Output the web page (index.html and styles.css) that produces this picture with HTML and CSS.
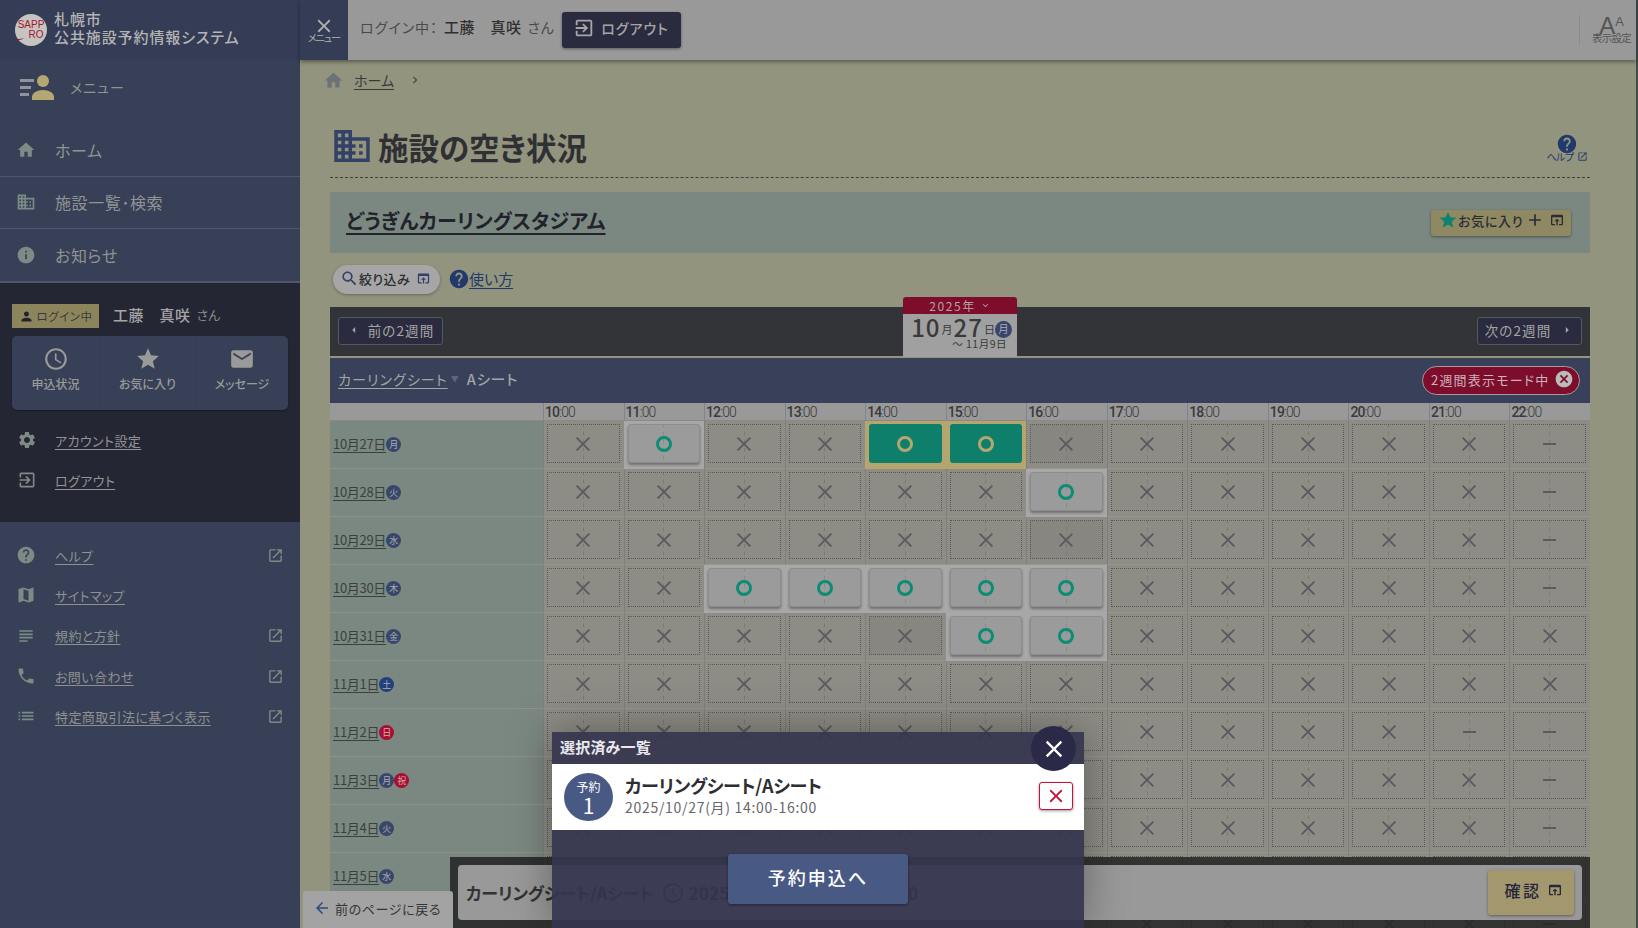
FILE: index.html
```html
<!DOCTYPE html>
<html lang="ja">
<head>
<meta charset="utf-8">
<title>施設の空き状況</title>
<link rel="stylesheet" href="styles.css">
</head>
<body>
<svg class="defs" aria-hidden="true">
<symbol id="i-home" viewBox="0 0 24 24"><path d="M10 20v-6h4v6h5v-8h3L12 3 2 12h3v8z"/></symbol>
<symbol id="i-biz" viewBox="0 0 24 24"><path d="M12 7V3H2v18h20V7H12zM6 19H4v-2h2v2zm0-4H4v-2h2v2zm0-4H4V9h2v2zm0-4H4V5h2v2zm4 12H8v-2h2v2zm0-4H8v-2h2v2zm0-4H8V9h2v2zm0-4H8V5h2v2zm10 12h-8v-2h2v-2h-2v-2h2v-2h-2V9h8v10zm-2-8h-2v2h2v-2zm0 4h-2v2h2v-2z"/></symbol>
<symbol id="i-info" viewBox="0 0 24 24"><path d="M12 2C6.48 2 2 6.48 2 12s4.48 10 10 10 10-4.48 10-10S17.52 2 12 2zm1 15h-2v-6h2v6zm0-8h-2V7h2v2z"/></symbol>
<symbol id="i-help" viewBox="0 0 24 24"><path d="M12 2C6.48 2 2 6.48 2 12s4.48 10 10 10 10-4.48 10-10S17.52 2 12 2zm1 17h-2v-2h2v2zm2.07-7.75l-.9.92C13.45 12.9 13 13.5 13 15h-2v-.5c0-1.1.45-2.1 1.17-2.83l1.24-1.26c.37-.36.59-.86.59-1.41 0-1.1-.9-2-2-2s-2 .9-2 2H8c0-2.21 1.79-4 4-4s4 1.79 4 4c0 .88-.36 1.68-.93 2.25z"/></symbol>
<symbol id="i-person" viewBox="0 0 24 24"><path d="M12 12c2.21 0 4-1.79 4-4s-1.79-4-4-4-4 1.79-4 4 1.79 4 4 4zm0 2c-2.67 0-8 1.34-8 4v2h16v-2c0-2.66-5.33-4-8-4z"/></symbol>
<symbol id="i-clock" viewBox="0 0 24 24"><path d="M11.99 2C6.47 2 2 6.48 2 12s4.47 10 9.99 10C17.52 22 22 17.52 22 12S17.52 2 11.99 2zM12 20c-4.42 0-8-3.58-8-8s3.58-8 8-8 8 3.58 8 8-3.58 8-8 8zm.5-13H11v6l5.25 3.15.75-1.23-4.5-2.67z"/></symbol>
<symbol id="i-star" viewBox="0 0 24 24"><path d="M12 17.27L18.18 21l-1.64-7.03L22 9.24l-7.19-.61L12 2 9.19 8.63 2 9.24l5.46 4.73L5.82 21z"/></symbol>
<symbol id="i-mail" viewBox="0 0 24 24"><path d="M20 4H4c-1.1 0-1.99.9-1.99 2L2 18c0 1.1.9 2 2 2h16c1.1 0 2-.9 2-2V6c0-1.1-.9-2-2-2zm0 4l-8 5-8-5V6l8 5 8-5v2z"/></symbol>
<symbol id="i-gear" viewBox="0 0 24 24"><path d="M19.14 12.94c.04-.3.06-.61.06-.94 0-.32-.02-.64-.07-.94l2.03-1.58c.18-.14.23-.41.12-.61l-1.92-3.32c-.12-.22-.37-.29-.59-.22l-2.39.96c-.5-.38-1.03-.7-1.62-.94l-.36-2.54c-.04-.24-.24-.41-.48-.41h-3.84c-.24 0-.43.17-.47.41l-.36 2.54c-.59.24-1.13.57-1.62.94l-2.39-.96c-.22-.08-.47 0-.59.22L2.74 8.87c-.12.21-.08.47.12.61l2.03 1.58c-.05.3-.09.63-.09.94s.02.64.07.94l-2.03 1.58c-.18.14-.23.41-.12.61l1.92 3.32c.12.22.37.29.59.22l2.39-.96c.5.38 1.03.7 1.62.94l.36 2.54c.05.24.24.41.48.41h3.84c.24 0 .44-.17.47-.41l.36-2.54c.59-.24 1.13-.56 1.62-.94l2.39.96c.22.08.47 0 .59-.22l1.92-3.32c.12-.22.07-.47-.12-.61l-2.01-1.58zM12 15.6c-1.98 0-3.6-1.62-3.6-3.6s1.62-3.6 3.6-3.6 3.6 1.62 3.6 3.6-1.62 3.6-3.6 3.6z"/></symbol>
<symbol id="i-exit" viewBox="0 0 24 24"><path d="M10.09 15.59L11.5 17l5-5-5-5-1.41 1.41L12.67 11H3v2h9.67l-2.58 2.59zM19 3H5c-1.11 0-2 .9-2 2v4h2V5h14v14H5v-4H3v4c0 1.1.89 2 2 2h14c1.1 0 2-.9 2-2V5c0-1.1-.9-2-2-2z"/></symbol>
<symbol id="i-map" viewBox="0 0 24 24"><path d="M20.5 3l-.16.03L15 5.1 9 3 3.36 4.9c-.21.07-.36.25-.36.48V20.5c0 .28.22.5.5.5l.16-.03L9 18.9l6 2.1 5.64-1.9c.21-.07.36-.25.36-.48V3.5c0-.28-.22-.5-.5-.5zM15 19l-6-2.11V5l6 2.11V19z"/></symbol>
<symbol id="i-notes" viewBox="0 0 24 24"><path d="M14 17H4v2h10v-2zm6-8H4v2h16V9zM4 15h16v-2H4v2zM4 5v2h16V5H4z"/></symbol>
<symbol id="i-phone" viewBox="0 0 24 24"><path d="M6.62 10.79c1.44 2.83 3.76 5.14 6.59 6.59l2.2-2.2c.27-.27.67-.36 1.02-.24 1.12.37 2.33.57 3.57.57.55 0 1 .45 1 1V20c0 .55-.45 1-1 1-9.39 0-17-7.61-17-17 0-.55.45-1 1-1h3.5c.55 0 1 .45 1 1 0 1.25.2 2.45.57 3.57.11.35.03.74-.25 1.02l-2.2 2.2z"/></symbol>
<symbol id="i-list" viewBox="0 0 24 24"><path d="M3 13h2v-2H3v2zm0 4h2v-2H3v2zm0-8h2V7H3v2zm4 4h14v-2H7v2zm0 4h14v-2H7v2zM7 7v2h14V7H7z"/></symbol>
<symbol id="i-ext" viewBox="0 0 24 24"><path d="M19 19H5V5h7V3H5c-1.11 0-2 .9-2 2v14c0 1.1.89 2 2 2h14c1.1 0 2-.9 2-2v-7h-2v7zM14 3v2h3.59l-9.83 9.83 1.41 1.41L19 6.41V10h2V3h-7z"/></symbol>
<symbol id="i-search" viewBox="0 0 24 24"><path d="M15.5 14h-.79l-.28-.27C15.41 12.59 16 11.11 16 9.5 16 5.91 13.09 3 9.5 3S3 5.91 3 9.5 5.91 16 9.5 16c1.61 0 3.09-.59 4.23-1.57l.27.28v.79l5 4.99L20.49 19l-4.99-5zm-6 0C7.01 14 5 11.99 5 9.5S7.01 5 9.5 5 14 7.01 14 9.5 11.99 14 9.5 14z"/></symbol>
<symbol id="i-close" viewBox="0 0 24 24"><path d="M19 6.41L17.59 5 12 10.59 6.41 5 5 6.41 10.59 12 5 17.59 6.41 19 12 13.41 17.59 19 19 17.59 13.41 12z"/></symbol>
<symbol id="i-open" viewBox="0 0 24 24"><path d="M19 4H5c-1.11 0-2 .9-2 2v12c0 1.1.89 2 2 2h4v-2H5V8h14v10h-4v2h4c1.1 0 2-.9 2-2V6c0-1.1-.89-2-2-2zm-7 6l-4 4h3v6h2v-6h3l-4-4z"/></symbol>
<symbol id="i-cancel" viewBox="0 0 24 24"><path d="M12 2C6.47 2 2 6.47 2 12s4.47 10 10 10 10-4.47 10-10S17.53 2 12 2zm5 13.59L15.59 17 12 13.41 8.41 17 7 15.59 10.59 12 7 8.41 8.41 7 12 10.59 15.59 7 17 8.41 13.41 12 17 15.59z"/></symbol>
<symbol id="i-add" viewBox="0 0 24 24"><path d="M19 13h-6v6h-2v-6H5v-2h6V5h2v6h6v2z"/></symbol>
<symbol id="i-back" viewBox="0 0 24 24"><path d="M20 11H7.83l5.59-5.59L12 4l-8 8 8 8 1.41-1.41L7.83 13H20v-2z"/></symbol>
<symbol id="i-caretl" viewBox="0 0 24 24"><path d="M14 7l-5 5 5 5V7z"/></symbol>
<symbol id="i-caretr" viewBox="0 0 24 24"><path d="M10 17l5-5-5-5v10z"/></symbol>
<symbol id="i-more" viewBox="0 0 24 24"><path d="M16.59 8.59L12 13.17 7.41 8.59 6 10l6 6 6-6z"/></symbol>
<symbol id="i-chev" viewBox="0 0 24 24"><path d="M10 6L8.59 7.41 13.17 12l-4.58 4.59L10 18l6-6z"/></symbol>
</svg>

<div class="app">
  <aside class="side">
    <div class="brand">
      <div class="logo"><span>SAPP</span><span>‿RO</span></div>
      <div class="brand-name">札幌市<br>公共施設予約情報システム</div>
    </div>
    <div class="menu-head">
      <svg class="menu-mark" viewBox="0 0 34 26"><rect x="0" y="5" width="14" height="3"/><rect x="0" y="12" width="11" height="3"/><rect x="0" y="19" width="9" height="3"/><circle class="tan" cx="23" cy="7" r="6"/><path class="tan" d="M12 26v-3c0-4 5-7 11-7s11 3 11 7v3z"/></svg>
      <span>メニュー</span>
    </div>
    <nav class="main-nav">
      <a class="nav-item"><svg class="ic"><use href="#i-home"/></svg>ホーム</a>
      <a class="nav-item"><svg class="ic"><use href="#i-biz"/></svg>施設一覧･検索</a>
      <a class="nav-item"><svg class="ic"><use href="#i-info"/></svg>お知らせ</a>
    </nav>
    <section class="user-box">
      <div class="user-line">
        <span class="login-tag"><svg class="ic-s"><use href="#i-person"/></svg>ログイン中</span>
        <span class="user-name">工藤　真咲</span><span class="user-san">さん</span>
      </div>
      <div class="tiles">
        <a class="tile"><svg><use href="#i-clock"/></svg>申込状況</a>
        <a class="tile"><svg><use href="#i-star"/></svg>お気に入り</a>
        <a class="tile"><svg><use href="#i-mail"/></svg>メッセージ</a>
      </div>
      <a class="sub-link"><svg class="ic"><use href="#i-gear"/></svg><u>アカウント設定</u></a>
      <a class="sub-link"><svg class="ic"><use href="#i-exit"/></svg><u>ログアウト</u></a>
    </section>
    <nav class="foot-nav">
      <a class="sub-link"><svg class="ic"><use href="#i-help"/></svg><u>ヘルプ</u><svg class="ext"><use href="#i-ext"/></svg></a>
      <a class="sub-link"><svg class="ic"><use href="#i-map"/></svg><u>サイトマップ</u></a>
      <a class="sub-link"><svg class="ic"><use href="#i-notes"/></svg><u>規約と方針</u><svg class="ext"><use href="#i-ext"/></svg></a>
      <a class="sub-link"><svg class="ic"><use href="#i-phone"/></svg><u>お問い合わせ</u><svg class="ext"><use href="#i-ext"/></svg></a>
      <a class="sub-link"><svg class="ic"><use href="#i-list"/></svg><u>特定商取引法に基づく表示</u><svg class="ext"><use href="#i-ext"/></svg></a>
    </nav>
  </aside>

  <div class="main">
    <header class="topbar">
      <button class="menu-btn"><svg><use href="#i-close"/></svg><span>メニュー</span></button>
      <div class="who">ログイン中：<b>工藤　真咲</b><small>さん</small></div>
      <button class="logout"><svg><use href="#i-exit"/></svg>ログアウト</button>
      <div class="font-set"><div class="aa"><span>A</span><em>A</em></div><span>表示設定</span></div>
    </header>

    <div class="content">
      <div class="crumbs"><svg><use href="#i-home"/></svg><u>ホーム</u><svg class="crumb-sep"><use href="#i-chev"/></svg></div>
      <div class="title-row">
        <svg class="title-ic"><use href="#i-biz"/></svg>
        <h1>施設の空き状況</h1>
        <a class="help"><svg class="help-ic"><use href="#i-help"/></svg><span>ヘルプ<svg><use href="#i-ext"/></svg></span></a>
      </div>
      <div class="facility">
        <h2>どうぎんカーリングスタジアム</h2>
        <button class="fav"><svg class="fav-star"><use href="#i-star"/></svg>お気に入り<svg class="fav-plus"><use href="#i-add"/></svg><svg class="fav-open"><use href="#i-open"/></svg></button>
      </div>
      <div class="tools">
        <button class="filter"><svg class="f-search"><use href="#i-search"/></svg>絞り込み<svg class="f-open"><use href="#i-open"/></svg></button>
        <svg class="how-ic"><use href="#i-help"/></svg><u class="how">使い方</u>
      </div>

      <div class="period">
        <button class="step"><svg><use href="#i-caretl"/></svg>前の2週間</button>
        <div class="date-tab">
          <div class="tab-year">2025年<svg><use href="#i-more"/></svg></div>
          <div class="tab-date"><b>10</b><i>月</i><b>27</b><i>日</i><span class="dow">月</span></div>
          <div class="tab-end">〜 11月9日</div>
        </div>
        <button class="step"><span>次の2週間</span><svg><use href="#i-caretr"/></svg></button>
      </div>
      <div class="room-bar">
        <u>カーリングシート</u><span class="tri">▼</span><strong>Aシート</strong>
        <button class="mode">2週間表示モード中<svg><use href="#i-cancel"/></svg></button>
      </div>

      <div class="grid">
        <div class="hd blank"></div>
        <div class="hd"><b>10</b>:00</div><div class="hd"><b>11</b>:00</div><div class="hd"><b>12</b>:00</div><div class="hd"><b>13</b>:00</div><div class="hd"><b>14</b>:00</div><div class="hd"><b>15</b>:00</div><div class="hd"><b>16</b>:00</div><div class="hd"><b>17</b>:00</div><div class="hd"><b>18</b>:00</div><div class="hd"><b>19</b>:00</div><div class="hd"><b>20</b>:00</div><div class="hd"><b>21</b>:00</div><div class="hd"><b>22</b>:00</div>

        <div class="day"><u>10月27日</u><span class="dow">月</span></div>
        <div class="c"><b class="n"></b></div><div class="c on"><b class="y"></b></div><div class="c"><b class="n"></b></div><div class="c"><b class="n"></b></div><div class="c sel"><b class="y"></b></div><div class="c sel"><b class="y"></b></div><div class="c"><b class="n dk"></b></div><div class="c"><b class="n"></b></div><div class="c"><b class="n"></b></div><div class="c"><b class="n"></b></div><div class="c"><b class="n"></b></div><div class="c"><b class="n"></b></div><div class="c"><b class="d"></b></div>

        <div class="day"><u>10月28日</u><span class="dow">火</span></div>
        <div class="c"><b class="n"></b></div><div class="c"><b class="n"></b></div><div class="c"><b class="n"></b></div><div class="c"><b class="n"></b></div><div class="c"><b class="n"></b></div><div class="c"><b class="n"></b></div><div class="c on"><b class="y"></b></div><div class="c"><b class="n"></b></div><div class="c"><b class="n"></b></div><div class="c"><b class="n"></b></div><div class="c"><b class="n"></b></div><div class="c"><b class="n"></b></div><div class="c"><b class="d"></b></div>

        <div class="day"><u>10月29日</u><span class="dow">水</span></div>
        <div class="c"><b class="n"></b></div><div class="c"><b class="n"></b></div><div class="c"><b class="n"></b></div><div class="c"><b class="n"></b></div><div class="c"><b class="n"></b></div><div class="c"><b class="n"></b></div><div class="c"><b class="n dk"></b></div><div class="c"><b class="n"></b></div><div class="c"><b class="n"></b></div><div class="c"><b class="n"></b></div><div class="c"><b class="n"></b></div><div class="c"><b class="n"></b></div><div class="c"><b class="d"></b></div>

        <div class="day"><u>10月30日</u><span class="dow">木</span></div>
        <div class="c"><b class="n"></b></div><div class="c"><b class="n"></b></div><div class="c on"><b class="y"></b></div><div class="c on"><b class="y"></b></div><div class="c on"><b class="y"></b></div><div class="c on"><b class="y"></b></div><div class="c on"><b class="y"></b></div><div class="c"><b class="n"></b></div><div class="c"><b class="n"></b></div><div class="c"><b class="n"></b></div><div class="c"><b class="n"></b></div><div class="c"><b class="n"></b></div><div class="c"><b class="d"></b></div>

        <div class="day"><u>10月31日</u><span class="dow">金</span></div>
        <div class="c"><b class="n"></b></div><div class="c"><b class="n"></b></div><div class="c"><b class="n"></b></div><div class="c"><b class="n"></b></div><div class="c"><b class="n dk"></b></div><div class="c on"><b class="y"></b></div><div class="c on"><b class="y"></b></div><div class="c"><b class="n"></b></div><div class="c"><b class="n"></b></div><div class="c"><b class="n"></b></div><div class="c"><b class="n"></b></div><div class="c"><b class="n"></b></div><div class="c"><b class="n"></b></div>

        <div class="day"><u>11月1日</u><span class="dow sat">土</span></div>
        <div class="c"><b class="n"></b></div><div class="c"><b class="n"></b></div><div class="c"><b class="n"></b></div><div class="c"><b class="n"></b></div><div class="c"><b class="n"></b></div><div class="c"><b class="n"></b></div><div class="c"><b class="n"></b></div><div class="c"><b class="n"></b></div><div class="c"><b class="n"></b></div><div class="c"><b class="n"></b></div><div class="c"><b class="n"></b></div><div class="c"><b class="n"></b></div><div class="c"><b class="n"></b></div>

        <div class="day"><u>11月2日</u><span class="dow sun">日</span></div>
        <div class="c"><b class="n"></b></div><div class="c"><b class="n"></b></div><div class="c"><b class="n"></b></div><div class="c"><b class="n"></b></div><div class="c"><b class="n"></b></div><div class="c"><b class="n"></b></div><div class="c"><b class="n"></b></div><div class="c"><b class="n"></b></div><div class="c"><b class="n"></b></div><div class="c"><b class="n"></b></div><div class="c"><b class="n"></b></div><div class="c"><b class="d"></b></div><div class="c"><b class="d"></b></div>

        <div class="day"><u>11月3日</u><span class="dow">月</span><span class="dow sun">祝</span></div>
        <div class="c"><b class="n"></b></div><div class="c"><b class="n"></b></div><div class="c"><b class="n"></b></div><div class="c"><b class="n"></b></div><div class="c"><b class="n"></b></div><div class="c"><b class="n"></b></div><div class="c"><b class="n"></b></div><div class="c"><b class="n"></b></div><div class="c"><b class="n"></b></div><div class="c"><b class="n"></b></div><div class="c"><b class="n"></b></div><div class="c"><b class="n"></b></div><div class="c"><b class="d"></b></div>

        <div class="day"><u>11月4日</u><span class="dow">火</span></div>
        <div class="c"><b class="n"></b></div><div class="c"><b class="n"></b></div><div class="c"><b class="n"></b></div><div class="c"><b class="n"></b></div><div class="c"><b class="n"></b></div><div class="c"><b class="n"></b></div><div class="c"><b class="n"></b></div><div class="c"><b class="n"></b></div><div class="c"><b class="n"></b></div><div class="c"><b class="n"></b></div><div class="c"><b class="n"></b></div><div class="c"><b class="n"></b></div><div class="c"><b class="d"></b></div>

        <div class="day"><u>11月5日</u><span class="dow">水</span></div>
        <div class="c"><b class="n"></b></div><div class="c"><b class="n"></b></div><div class="c"><b class="n"></b></div><div class="c"><b class="n"></b></div><div class="c"><b class="n"></b></div><div class="c"><b class="n"></b></div><div class="c"><b class="n"></b></div><div class="c"><b class="n"></b></div><div class="c"><b class="n"></b></div><div class="c"><b class="n"></b></div><div class="c"><b class="n"></b></div><div class="c"><b class="n"></b></div><div class="c"><b class="d"></b></div>

        <div class="day"></div>
        <div class="c"><b class="n"></b></div><div class="c"><b class="n"></b></div><div class="c"><b class="n"></b></div><div class="c"><b class="n"></b></div><div class="c"><b class="n"></b></div><div class="c"><b class="n"></b></div><div class="c"><b class="n"></b></div><div class="c"><b class="n"></b></div><div class="c"><b class="n"></b></div><div class="c"><b class="n"></b></div><div class="c"><b class="n"></b></div><div class="c"><b class="n"></b></div><div class="c"><b class="d"></b></div>
      </div>
    </div>
  </div>
  <div class="edge"></div>

  <a class="back"><svg><use href="#i-back"/></svg>前のページに戻る</a>
  <div class="summary">
    <div class="summary-in">
      <span class="s-name">カーリングシート/Aシート</span>
      <svg class="s-clock"><use href="#i-clock"/></svg>
      <span class="s-time">2025/10/27(月) 14:00-16:00</span>
      <button class="confirm">確認<svg><use href="#i-open"/></svg></button>
    </div>
  </div>

  <div class="modal">
    <button class="m-close"><svg><use href="#i-close"/></svg></button>
    <div class="m-title">選択済み一覧</div>
    <div class="m-item">
      <div class="m-num"><span>予約</span><b>1</b></div>
      <div class="m-text"><strong>カーリングシート/Aシート</strong><span>2025/10/27(月) 14:00-16:00</span></div>
      <button class="m-del"><svg><use href="#i-close"/></svg></button>
    </div>
    <button class="m-go">予約申込へ</button>
  </div>
</div>
</body>
</html>
```
FILE: styles.css
```css
*{box-sizing:border-box}
html,body{margin:0;height:100%;overflow:hidden}
body{font-family:"Noto Sans CJK JP","Noto Sans",sans-serif;font-feature-settings:"palt";color:#2b2b33;background:#93947e}
button{font:inherit;border:0;padding:0;color:inherit}
svg{fill:currentColor;display:block}
.defs{display:none}
.app{position:relative;display:flex;width:1638px;height:928px;overflow:hidden}

/* sidebar */
.side{width:300px;flex:none;background:#374056;color:#929394;display:flex;flex-direction:column;height:928px}
.brand{height:60px;background:#343d55;display:flex;align-items:center;padding-left:15px;gap:7px}
.logo{width:32px;height:32px;border-radius:50%;background:#c6c4c0;color:#a8152f;display:flex;flex-direction:column;align-items:center;justify-content:center;font:400 10px/10px "Liberation Sans Narrow","Liberation Sans",sans-serif}
.brand-name{font-size:15px;line-height:18px;font-weight:500;color:#b4b4b4;letter-spacing:.9px;padding-bottom:4px}
.menu-head{height:60px;display:flex;align-items:center;padding:0 0 6px 20px;gap:16px;font-size:14px;letter-spacing:1px}
.menu-mark{width:34px;height:26px;fill:#8e9498}
.menu-mark .tan{fill:#b5a773}
.main-nav{margin-top:4px}
.nav-item{display:flex;align-items:center;height:52px;border-bottom:1px solid #4e576c;font-size:16px;letter-spacing:.6px;padding:0 0 1px 16px;gap:19px}
.nav-item:first-child,.nav-item:last-child{height:53px}
.ic{width:20px;height:20px;flex:none;color:#7d8a85}
.user-box{background:#252633;height:240px;padding:21px 12px 0;border-top:1px solid #4e576c}
.user-line{display:flex;align-items:center;height:24px}
.login-tag{width:87px;height:24px;background:#8c855c;color:#3a3a3a;display:flex;align-items:center;justify-content:center;gap:3px;font-size:11.5px;letter-spacing:.5px}
.ic-s{width:15px;height:15px;color:#22222e}
.user-name{margin-left:14px;font-size:15px;font-weight:500;color:#a5a5a5;letter-spacing:.5px;padding-bottom:4px}
.user-san{margin-left:6px;font-size:13px;color:#8a8a8a;padding-bottom:4px}
.tiles{margin-top:8px;height:74px;background:#374056;border-radius:5px;display:grid;grid-template-columns:87px 96px 93px;box-shadow:0 1px 2px rgba(0,0,0,.3)}
.tile{display:flex;flex-direction:column;align-items:center;font-size:12px;font-weight:500;color:#9a9a9a;padding-top:10px;gap:3px;border-left:1px solid #333b50;line-height:17px}
.tile:first-child{border-left:0}
.tile svg{width:26px;height:26px}
.sub-link{display:flex;align-items:center;height:40px;font-size:13px;letter-spacing:.4px;padding:0 0 2px 5px}
.sub-link u{margin-left:18px;text-underline-offset:3px}
.user-box .tiles + .sub-link{margin-top:11px}
.foot-nav{padding:14px 0 0 16px}
.foot-nav .sub-link{padding-left:0;height:40.3px}
.foot-nav .sub-link u{margin-left:19px;color:#8f9091}
.ext{width:17px;height:17px;margin-left:auto;margin-right:16px;color:#7d8a85}

/* main */
.main{width:1336px;flex:none;display:flex;flex-direction:column}
.topbar{height:60px;flex:none;background:#999;display:flex;align-items:center;box-shadow:0 2px 4px rgba(0,0,0,.4);position:relative;z-index:1}
.menu-btn{width:48px;height:60px;background:#343d55;color:#b0b0b0;display:flex;flex-direction:column;align-items:center;padding-top:15px;font-size:10px;line-height:11px;letter-spacing:-1px}
.menu-btn svg{width:22px;height:22px;margin-bottom:-5px}
.who{margin-left:12px;font-size:14px;color:#4a4a4a;letter-spacing:1px;padding-bottom:7px}
.who b{font-weight:500;font-size:15px;color:#2f2f2f;margin-left:6px;letter-spacing:.5px}
.who small{font-size:14px;margin-left:6px;color:#4a4a4a;letter-spacing:.5px}
.logout{margin-left:8px;width:119px;height:36px;margin-top:-1px;background:#2b2b40;border-radius:3px;color:#a5a5a5;display:flex;align-items:center;padding:0 0 4px 11px;gap:6px;font-size:14px;letter-spacing:1px;font-weight:500;box-shadow:0 1px 3px rgba(0,0,0,.4)}
.logout svg{width:22px;height:22px}
.font-set{margin-left:auto;width:57px;height:30px;border-left:1px solid #8a8a8a;color:#555;font-size:10.5px;line-height:11px;display:flex;flex-direction:column;align-items:center;letter-spacing:-.8px;padding-left:7px}
.aa{display:flex;align-items:flex-start;height:17px;line-height:20px;font-family:"Liberation Sans",sans-serif;letter-spacing:0}
.aa span{font-size:24px;line-height:22px}
.aa em{font-style:normal;font-size:13px;line-height:13px}

.content{flex:1;padding:0 46px 0 30px;min-height:0}
.crumbs{height:40px;display:flex;align-items:center;color:#3a3a3a;font-size:14px}
.crumbs svg{width:21px;height:21px;color:#6b7376;margin-left:-7px;margin-right:10px}
.crumbs u{text-underline-offset:3px}
.crumbs .crumb-sep{width:14px;height:14px;color:#444;margin:0 0 0 14px}
.title-row{height:78px;border-bottom:1px dashed #3f3f3f;display:flex;align-items:flex-end;padding:0 0 3px 3px;margin-bottom:14px}
.title-ic{width:38px;height:38px;color:#344166;margin-bottom:9px;transform:scale(1.12,1.12)}
h1{font-size:30.5px;line-height:44px;margin:0 0 5px 7px;font-weight:700;color:#2f3034}
.help{margin-left:auto;display:flex;flex-direction:column;align-items:center;color:#223a6b;margin-bottom:11px;width:42px;margin-right:2px}
.help-ic{width:20px;height:20px;margin-bottom:-4px;transform:scale(1.1)}
.help span{display:flex;align-items:center;gap:3px;font-size:10px;line-height:13px;letter-spacing:-.5px}
.help span svg{width:11px;height:11px}
.facility{height:61px;background:#7b8881;display:flex;align-items:center;padding:0 19px 0 16px}
h2{margin:0;font-size:20px;font-weight:700;text-decoration:underline;text-underline-offset:4px;color:#22222c;letter-spacing:.25px;padding-bottom:4px}
.fav{margin-left:auto;width:140px;height:26px;background:#8f8963;border-radius:3px;display:flex;align-items:center;font-size:13px;font-weight:500;letter-spacing:.7px;color:#2b2b33;padding:0 0 5px 7px;box-shadow:0 1px 3px rgba(0,0,0,.4)}
.fav-star{width:20px;height:20px;color:#0f8272;flex:none}
.fav-plus{width:20px;height:20px;margin-left:2px;flex:none}
.fav-open{width:16px;height:16px;margin-left:4px;flex:none}
.tools{height:54px;display:flex;align-items:center;padding-left:3px}
.filter{width:107px;height:29px;border-radius:15px;background:#a6a6a6;display:flex;align-items:center;padding:0 0 3px 7px;font-size:13px;font-weight:500;letter-spacing:.4px;box-shadow:0 1px 3px rgba(0,0,0,.3);margin-top:-1px}
.f-search{width:19px;height:19px;flex:none;color:#344166}
.f-open{width:15px;height:15px;margin-left:6px;color:#344166;flex:none}
.how-ic{width:20px;height:20px;color:#223a6b;margin:0 0 2px 9px;transform:scale(1.1)}
.how{font-size:15px;color:#223a6b;text-underline-offset:3px;margin:0 0 4px 0}

.period{height:49px;background:#333438;display:flex;align-items:center;justify-content:space-between;padding:0 8px;position:relative;margin-bottom:2px}
.step{width:105px;height:28px;background:#2b2b40;border:1px solid #555663;border-radius:3px;color:#a5a5a5;font-size:13.5px;letter-spacing:1.1px;display:flex;align-items:center;justify-content:center;gap:5px;padding-bottom:3px;margin-top:-1px}
.step svg{width:14px;height:14px;flex:none;margin-right:2px}
.step span + svg{margin:0 0 0 4px}
.date-tab{position:absolute;left:50%;top:-10px;transform:translateX(-50%);width:114px;height:60px;background:#a0a0a0;border-radius:3px 3px 0 0;text-align:center;color:#3a3a3a;overflow:hidden}
.tab-year{height:17px;background:#7e0c2b;color:#b4a3a7;font-size:12px;line-height:17px;letter-spacing:1.6px;display:flex;align-items:center;justify-content:center;gap:4px}
.tab-year svg{width:11px;height:11px}
.tab-date{display:flex;align-items:center;justify-content:center;height:25px;line-height:24px;padding-left:3px}
.tab-date b{font-weight:500;font-size:24px;letter-spacing:1px}
.tab-date i{font-style:normal;font-size:11px;padding-top:5px;margin:0 1px}
.tab-date .dow{margin:5px 0 0 -1px}
.tab-end{font-size:10.5px;line-height:11px;text-align:right;padding-right:10px;letter-spacing:.5px;margin-top:-1px}
.dow{display:inline-flex;align-items:center;justify-content:center;width:17px;height:17px;border-radius:50%;background:#39466a;color:#a8acb6;font-size:10.5px;font-weight:400}
.dow.sat{background:#23407a}
.dow.sun{background:#a50f30;color:#d9aab4}
.room-bar{height:45px;background:#384159;display:flex;align-items:center;padding:0 10px 0 8px;color:#a4a4a4;font-size:14px}
.room-bar u{text-underline-offset:3px;letter-spacing:1.1px;margin-bottom:4px}
.tri{font-size:8px;color:#5f6678;margin:0 3px 4px}
.room-bar strong{font-weight:500;font-size:14.5px;margin:0 0 4px 5px;letter-spacing:.9px}
.mode{margin-left:auto;width:158px;height:29px;border:1px solid #a69aa3;border-radius:15px;background:#7e0c2b;color:#c6b4ba;font-size:13px;letter-spacing:1.2px;display:flex;align-items:center;padding:0 0 3px 8px;gap:6px}
.mode svg{width:20px;height:20px;color:#bbb;flex:none;margin-left:-1px}

.grid{display:grid;grid-template-columns:213px repeat(13,1fr);grid-template-rows:18px repeat(11,48px);background:#8a8a83}
.hd{background:#999;border-left:1px solid #7c8598;font-size:14px;line-height:18px;padding-left:1px;color:#3a3a3a;letter-spacing:-.9px;font-family:Roboto,sans-serif;font-weight:300;border-bottom:1px solid #8a8a83}
.hd b{font-weight:500}
.hd.blank{border-left:0}
.day{background:#7b8881;border-bottom:1px solid #8f9680;display:flex;align-items:center;padding:0 0 2px 3px;font-size:13px;color:#3a4040;letter-spacing:-.3px}
.day u{text-underline-offset:3px}
.day .dow{width:15px;height:15px;font-size:9px;margin-top:2px}
.c{padding:3px 4px 5px 3px;border-left:1px solid #807f79;border-bottom:1px solid #969689;background:#8d8c85}
.c b{display:flex;align-items:center;justify-content:center;height:100%;border:1px dotted #5a5a58;background:linear-gradient(#7a7a78 50%,transparent 50%) center/1px 8px repeat-y}
.c .dk{background-color:#878680}
.n::after{content:"";width:18px;height:18px;background:linear-gradient(#5a5a60,#5a5a60) center/100% 2px no-repeat,linear-gradient(#5a5a60,#5a5a60) center/2px 100% no-repeat;transform:rotate(45deg)}
.d::after{content:"";width:13px;height:2px;background:#5a5a60}
.c.on{background:#a8a8a8;border-left-color:#a8a8a8;border-bottom-color:#a8a8a8}
.c.on b{border:1px solid #8c8c8c;background:linear-gradient(#8a8a8a 50%,transparent 50%) center/1px 8px repeat-y #9b9b9b;border-radius:3px;box-shadow:0 2px 3px rgba(0,0,0,.35)}
.y::after{content:"";width:10px;height:10px;border:3.5px solid #0b8c75;border-radius:50%}
.c.sel{background:#b5a670;border-left-color:#b5a670;border-bottom-color:#b5a670}
.c.sel b{border:0;background:#0d7f6a;border-radius:3px}
.c.sel .y::after{border-color:#b5a670}
.edge{width:2px;flex:none;background:#3f4c4a}

/* overlays */
.back{position:absolute;left:303px;top:891px;width:150px;height:37px;background:#a3a3a3;border-radius:3px 3px 0 0;display:flex;align-items:center;padding:0 0 3px 10px;gap:4px;font-size:13px;color:#353535;letter-spacing:.6px;z-index:3}
.back svg{width:18px;height:18px;color:#2d4a7a;flex:none}
.summary{position:absolute;left:450px;top:857px;width:1140px;height:71px;background:rgba(35,35,35,.85);padding:8px;z-index:2}
.summary-in{height:55px;background:#999;border-radius:4px;display:flex;align-items:center;padding:0 8px;font-size:17px;font-weight:700;color:#333}
.s-name{letter-spacing:-.1px}
.s-clock{width:24px;height:24px;margin:0 4px 0 7px;color:#444;flex:none}
.s-time{letter-spacing:.2px}
.confirm{margin-left:auto;width:86px;height:45px;background:#a3986d;border-radius:3px;display:flex;align-items:center;justify-content:center;gap:5px;font-size:16px;font-weight:500;letter-spacing:2.5px;color:#26263c;box-shadow:0 1px 3px rgba(0,0,0,.4);padding:0 0 6px 5px}
.confirm svg{width:16px;height:16px}
.modal{position:absolute;left:552px;top:732px;width:532px;height:196px;background:rgba(52,52,78,.92);z-index:5;display:flex;flex-direction:column;box-shadow:0 0 40px rgba(0,0,0,.35)}
.m-close{position:absolute;right:8px;top:-6px;width:45px;height:45px;border-radius:50%;background:#2a2a48;color:#fff;display:flex;align-items:center;justify-content:center}
.m-close svg{width:28px;height:28px}
.m-title{height:32px;padding-left:8px;color:#e8e8ee;font-size:15px;line-height:29px;font-weight:700;letter-spacing:.2px}
.m-item{height:66px;background:#fff;display:flex;align-items:center;padding:0 11px 0 12px}
.m-num{width:49px;height:48px;border-radius:50%;background:#485a84;color:#fff;display:flex;flex-direction:column;align-items:center;justify-content:center;font-size:12px;line-height:13px;padding-top:1px}
.m-num b{font:400 21px/21px "Noto Sans CJK JP",sans-serif;margin-top:2px}
.m-text{margin-left:12px;display:flex;flex-direction:column;padding-bottom:4px}
.m-text strong{font-size:18px;line-height:24px;color:#2e2e33;letter-spacing:-.25px}
.m-text span{font-size:14px;line-height:21px;color:#66666b;letter-spacing:.7px}
.m-del{margin-left:auto;margin-top:-2px;width:34px;height:28px;background:#fff;border:1px solid #c8103c;border-radius:3px;color:#c8103c;display:flex;align-items:center;justify-content:center;box-shadow:0 1px 3px rgba(0,0,0,.4)}
.m-del svg{width:22px;height:22px}
.m-go{align-self:center;margin-top:24px;width:180px;height:50px;background:#485a84;color:#fff;border-radius:3px;font-size:18px;font-weight:500;letter-spacing:2px;box-shadow:0 1px 3px rgba(0,0,0,.4);padding-bottom:4px}
```
